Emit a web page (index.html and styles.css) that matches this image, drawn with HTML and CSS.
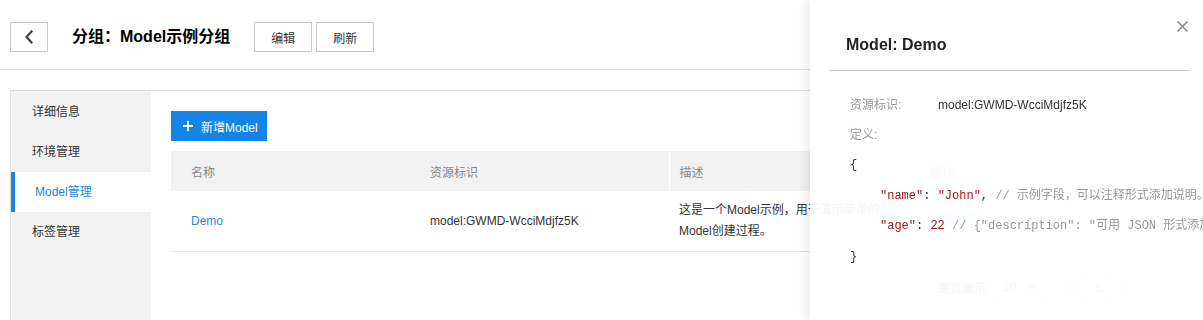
FILE: index.html
```html
<!DOCTYPE html>
<html lang="zh-CN">
<head>
<meta charset="utf-8">
<title>Model管理</title>
<link rel="stylesheet" href="styles.css">
</head>
<body>
<div class="page">
  <header class="topbar">
    <button class="back" aria-label="返回">
      <svg width="10" height="14" viewBox="0 0 10 14"><path d="M7.5 1.5 L2.5 7 L7.5 12.5" fill="none" stroke="#444" stroke-width="2.2" stroke-linecap="square"/></svg>
    </button>
    <h1 class="title">分组：Model示例分组</h1>
    <div class="actions">
      <button class="btn">编辑</button>
      <button class="btn">刷新</button>
    </div>
  </header>

  <div class="body">
    <nav class="side">
      <a class="side-item">详细信息</a>
      <a class="side-item">环境管理</a>
      <a class="side-item active">Model管理</a>
      <a class="side-item">标签管理</a>
    </nav>
    <main class="content">
      <button class="primary">
        <svg width="10" height="10" viewBox="0 0 10 10"><path d="M5 0 V10 M0 5 H10" stroke="#fff" stroke-width="2"/></svg>
        <span>新增Model</span>
      </button>
      <table class="grid">
        <colgroup><col class="c1"><col class="c2"><col class="c3"><col></colgroup>
        <thead>
          <tr><th>名称</th><th>资源标识</th><th class="sep">描述</th><th class="sep">操作</th></tr>
        </thead>
        <tbody>
          <tr>
            <td><a class="link">Demo</a></td>
            <td>model:GWMD-WcciMdjfz5K</td>
            <td class="desc">这是一个Model示例，用于演示简单的Model创建过程。</td>
            <td class="ops"><a class="link">详情</a> <a class="link">删除</a></td>
          </tr>
        </tbody>
      </table>
      <div class="pager">
        <span class="pager-label">每页展示</span>
        <span class="pager-select">10
          <svg width="10" height="6" viewBox="0 0 10 6"><path d="M1 1 L5 5 L9 1" fill="none" stroke="#666" stroke-width="1.5"/></svg>
        </span>
        <span class="pager-arrow">&lt;</span>
        <span class="pager-page">1</span>
        <span class="pager-arrow">&gt;</span>
      </div>
    </main>
  </div>
</div>

<aside class="drawer">
  <div class="drawer-head">
    <h2 class="drawer-title">Model: Demo</h2>
    <button class="close" aria-label="关闭">
      <svg width="11" height="11" viewBox="0 0 11 11"><path d="M0.5 0.5 L10.5 10.5 M10.5 0.5 L0.5 10.5" stroke="#888" stroke-width="1.5"/></svg>
    </button>
  </div>
  <div class="drawer-body">
    <div class="info-row"><span class="info-label">资源标识:</span><span class="info-value">model:GWMD-WcciMdjfz5K</span></div>
    <div class="info-row"><span class="info-label">定义:</span></div>
    <div class="code">
      <div class="code-line">{</div>
      <div class="code-line indent"><span class="k">"name"</span>: <span class="s">"John"</span>, <span class="cm">// 示例字段，可以注释形式添加说明。</span></div>
      <div class="code-line indent"><span class="k">"age"</span>: <span class="n">22</span> <span class="cm">// {"description": "可用 JSON 形式添加描述信息"}</span></div>
      <div class="code-line">}</div>
    </div>
  </div>
</aside>
</body>
</html>
```

FILE: styles.css
```css
html, body {
  margin: 0;
  padding: 0;
  overflow: hidden;
  height: 100%;
  background: #fff;
}
body {
  font-family: "Liberation Sans", "Noto Sans CJK SC", sans-serif;
  font-size: 12px;
  color: #333;
}
button {
  font-family: inherit;
  font-size: 12px;
  cursor: pointer;
}

.topbar {
  display: flex;
  align-items: flex-start;
  height: 70px;
  box-sizing: border-box;
  padding: 22px 0 0 10px;
  border-bottom: 1px solid #ddd;
}
.back {
  width: 38px;
  height: 30px;
  padding: 0;
  border: 1px solid #c8c8c8;
  background: #fff;
  display: flex;
  align-items: center;
  justify-content: center;
}
.title {
  margin: 3px 24px 0 24px;
  font-size: 16px;
  font-weight: 600;
  color: #000;
  line-height: 24px;
}
.actions {
  display: flex;
  gap: 4px;
}
.btn {
  width: 58px;
  height: 30px;
  border: 1px solid #c8c8c8;
  background: #fff;
  color: #333;
  padding: 0;
}

.body {
  display: flex;
  margin: 20px 10px 0 10px;
  border-top: 1px solid #ddd;
  border-left: 1px solid #ddd;
  height: 260px;
}
.side {
  width: 140px;
  flex: none;
  background: #f2f2f2;
  display: flex;
  flex-direction: column;
  padding-top: 1px;
}
.side-item {
  height: 40px;
  line-height: 40px;
  padding-left: 21px;
  color: #333;
  font-size: 12px;
}
.side-item.active {
  background: #fff;
  color: #1a84e6;
  border-left: 4px solid #1a84e6;
  padding-left: 20px;
}

.content {
  flex: 1;
  padding: 20px 20px 0 20px;
  min-width: 0;
}
.primary {
  display: flex;
  align-items: center;
  gap: 8px;
  height: 30px;
  width: 96px;
  padding: 0 0 0 12px;
  border: none;
  background: #1384e8;
  color: #fff;
}

.grid {
  margin-top: 10px;
  width: 100%;
  table-layout: fixed;
  border-collapse: collapse;
}
.grid col.c1 { width: 239px; }
.grid col.c2 { width: 259px; }
.grid col.c3 { width: 251px; }
.grid th {
  height: 40px;
  background: #f2f2f2;
  color: #888;
  font-weight: normal;
  text-align: left;
  padding: 0 0 0 20px;
}
.grid th.sep {
  padding-left: 10px;
  border-left: 1px solid #fff;
}
.grid td {
  height: 60px;
  padding: 0 0 0 20px;
  border-bottom: 1px solid #e5e5e5;
  color: #333;
  line-height: 21px;
}
.grid td.desc {
  padding: 0 10px 0 10px;
}
.grid td.ops {
  padding-left: 10px;
}
.link {
  color: #1f88e8;
}

.pager {
  display: flex;
  align-items: center;
  justify-content: flex-end;
  margin-top: 20px;
  padding-right: 38px;
  height: 31px;
  color: #333;
}
.pager-label {
  margin-right: 6px;
}
.pager-select {
  display: flex;
  align-items: center;
  justify-content: space-between;
  width: 54px;
  height: 30px;
  padding: 0 8px 0 10px;
  box-sizing: border-box;
  border-left: 1px solid #ddd;
  border-right: 1px solid #ddd;
  border-bottom: 1px solid #ddd;
  margin-right: 14px;
}
.pager-arrow {
  color: #999;
  padding: 0 8px;
}
.pager-page {
  width: 29px;
  height: 31px;
  box-sizing: border-box;
  border: 1px solid #ddd;
  display: flex;
  align-items: center;
  justify-content: center;
}

.drawer {
  position: fixed;
  top: 0;
  right: 0;
  bottom: 0;
  width: 393px;
  background: rgba(255, 255, 255, 0.95);
  box-shadow: -3px 0 10px rgba(0, 0, 0, 0.09);
}
.drawer-head {
  position: relative;
  height: 71px;
  box-sizing: border-box;
  margin: 0 13px 0 20px;
  padding: 33px 0 0 16px;
  border-bottom: 1px solid #ccc;
}
.drawer-title {
  margin: 0;
  font-size: 16px;
  font-weight: bold;
  line-height: 24px;
  color: #222;
}
.close {
  position: absolute;
  top: 21px;
  right: 2px;
  padding: 0;
  border: none;
  background: none;
  width: 11px;
  height: 11px;
}
.drawer-body {
  padding: 19px 0 0 40px;
}
.info-row {
  display: flex;
  line-height: 30px;
}
.info-label {
  width: 88px;
  color: #999;
}
.info-value {
  color: #333;
}
.code {
  font-family: "Liberation Mono", "Noto Sans CJK SC", monospace;
  font-size: 12px;
  color: #333;
}
.code-line {
  white-space: pre;
  line-height: 30.5px;
  height: 30.5px;
}
.code-line.indent {
  padding-left: 30px;
}
.code .k, .code .s, .code .n {
  color: #a31515;
}
.code .cm {
  color: #999;
}
```
